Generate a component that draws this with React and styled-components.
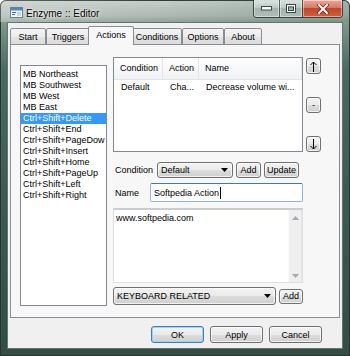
import React from 'react';
import styled, { createGlobalStyle } from 'styled-components';

const GlobalStyle = createGlobalStyle`
  html, body { margin: 0; padding: 0; background: #fff; }
  body { width: 350px; height: 356px; overflow: hidden; font-family: "Liberation Sans", Arial, sans-serif; }
  * { box-sizing: border-box; }
`;

const Window = styled.div`
  width: 350px;
  height: 356px;
  display: flex;
  flex-direction: column;
  padding: 0 7px 7px 7px;
  border-radius: 6px 6px 0 0;
  background: linear-gradient(180deg, #c4ccc8 0px, #a9b5af 16px, #7f958c 24px, #4a6a5f 70px, #3d5a50 200px, #334d45 100%);
  box-shadow: inset 0 0 0 1px #26352f;
`;

const TitleBar = styled.div`
  height: 22px;
  flex: none;
  display: flex;
  align-items: flex-start;
  margin: 0 -7px;
  padding: 0 7px 0 10px;
  border-radius: 6px 6px 0 0;
  background: linear-gradient(90deg, rgba(255,255,255,0.25) 0%, rgba(255,255,255,0.05) 45%, rgba(70,110,95,0.25) 100%);
`;

const TitleIcon = styled.svg`
  margin-top: 7px;
  flex: none;
`;

const TitleText = styled.div`
  margin-left: 3px;
  margin-top: 8px;
  font-size: 10px;
  line-height: 12px;
  color: #000;
  text-shadow: 0 0 5px rgba(255,255,255,0.95), 0 0 2px rgba(255,255,255,0.9);
`;

const Controls = styled.div`
  margin-left: auto;
  display: flex;
  height: 18px;
  border: 1px solid rgba(35,50,45,0.85);
  border-top: none;
  border-radius: 0 0 4px 4px;
  overflow: hidden;
`;

const CtrlBtn = styled.div`
  width: ${p => p.$w}px;
  height: 100%;
  display: flex;
  align-items: center;
  justify-content: center;
  border-left: ${p => (p.$first ? 'none' : '1px solid rgba(35,50,45,0.7)')};
  background: ${p =>
    p.$close
      ? 'linear-gradient(180deg, #e9a99c 0%, #d47a67 45%, #c2452c 50%, #d35e3f 100%)'
      : 'linear-gradient(180deg, rgba(235,242,239,0.75) 0%, rgba(200,214,208,0.6) 45%, rgba(160,180,172,0.55) 50%, rgba(185,205,198,0.6) 100%)'};
  box-shadow: inset 0 0 0 1px rgba(255,255,255,0.45);
`;

const Client = styled.div`
  flex: 1;
  display: flex;
  flex-direction: column;
  background: #f0f0f0;
  border: 1px solid #5f7770;
  padding: 3px 2px 0 2px;
`;

const TabStrip = styled.div`
  display: flex;
  align-items: flex-end;
  height: 19px;
  flex: none;
  position: relative;
  z-index: 1;
  margin-bottom: -1px;
`;

const Tab = styled.div`
  width: ${p => p.$w + (p.$active ? 4 : 0)}px;
  height: ${p => (p.$active ? 19 : 17)}px;
  margin: 0 ${p => (p.$active ? -2 : 0)}px;
  position: relative;
  z-index: ${p => (p.$active ? 2 : 1)};
  display: flex;
  align-items: center;
  justify-content: center;
  padding-bottom: ${p => (p.$active ? 2 : 0)}px;
  font-size: 9px;
  color: #000;
  border: 1px solid #898c95;
  border-bottom: ${p => (p.$active ? 'none' : '1px solid #898c95')};
  border-radius: 2px 2px 0 0;
  background: ${p => (p.$active ? '#f7f7f7' : 'linear-gradient(180deg, #f3f3f3 0%, #ececec 50%, #e2e2e2 51%, #dcdcdc 100%)')};
`;

const Panel = styled.div`
  height: 274px;
  flex: none;
  border: 1px solid #898c95;
  background: #f7f7f7;
  display: flex;
  align-items: flex-start;
  gap: 6px;
  padding: 12px 0 0 9px;
`;

const ListBox = styled.div`
  margin-top: 8px;
  width: 87px;
  height: 241px;
  border: 1px solid #828790;
  background: #fff;
  padding: 3px 0 0 0;
  overflow: hidden;
`;

const ListItem = styled.div`
  height: 11px;
  line-height: 11px;
  font-size: 9px;
  padding-left: 2px;
  white-space: nowrap;
  overflow: hidden;
  color: ${p => (p.$sel ? '#fff' : '#000')};
  background: ${p => (p.$sel ? '#3399ff' : 'transparent')};
`;

const RightCol = styled.div`
  width: 208px;
  display: flex;
  flex-direction: column;
`;

const TopRow = styled.div`
  display: flex;
  gap: 3px;
  height: 95px;
`;

const ListView = styled.div`
  width: 190px;
  height: 95px;
  border: 1px solid #828790;
  background: #fff;
  display: flex;
  flex-direction: column;
  overflow: hidden;
`;

const LvRow = styled.div`
  display: flex;
  height: ${p => (p.$header ? 22 : 14)}px;
  flex: none;
  background: ${p => (p.$header ? 'linear-gradient(180deg, #ffffff 0%, #f7f8f9 50%, #f1f2f4 100%)' : 'transparent')};
  border-bottom: ${p => (p.$header ? '1px solid #e2e3e6' : 'none')};
`;

const LvCell = styled.div`
  width: ${p => (p.$w ? `${p.$w}px` : 'auto')};
  flex: ${p => (p.$w ? 'none' : '1')};
  padding-left: ${p => (p.$header ? 6 : 7)}px;
  font-size: 9px;
  line-height: ${p => (p.$header ? 21 : 14)}px;
  color: #000;
  white-space: nowrap;
  overflow: hidden;
  border-right: ${p => (p.$header ? '1px solid #e3e4e7' : 'none')};
`;

const SideButtons = styled.div`
  width: 15px;
  display: flex;
  flex-direction: column;
  justify-content: space-between;
  padding-top: 1px;
`;

const Button = styled.div`
  width: ${p => p.$w}px;
  height: ${p => p.$h}px;
  flex: none;
  display: flex;
  align-items: center;
  justify-content: center;
  font-size: 9px;
  color: #000;
  border: 1px solid ${p => (p.$default ? '#3c7fb1' : '#707070')};
  border-radius: 3px;
  background: linear-gradient(180deg, #f2f2f2 0%, #ebebeb 50%, #dddddd 51%, #cfcfcf 100%);
  box-shadow: inset 0 0 0 1px ${p => (p.$default ? '#9ed4f3' : 'rgba(255,255,255,0.7)')};
`;

const FieldRow = styled.div`
  display: flex;
  align-items: center;
  gap: 3px;
  height: ${p => p.$h}px;
  margin-top: ${p => p.$mt}px;
`;

const Label = styled.div`
  width: ${p => p.$w}px;
  flex: none;
  padding-left: 2px;
  font-size: 9px;
  color: #000;
`;

const Combo = styled.div`
  width: ${p => p.$w}px;
  height: ${p => p.$h}px;
  flex: none;
  display: flex;
  align-items: center;
  justify-content: space-between;
  padding: 0 4px 0 3px;
  font-size: 9px;
  color: #000;
  border: 1px solid #707070;
  border-radius: 3px;
  background: linear-gradient(180deg, #f2f2f2 0%, #ebebeb 50%, #dddddd 51%, #cfcfcf 100%);
  box-shadow: inset 0 0 0 1px rgba(255,255,255,0.7);
`;

const Edit = styled.div`
  width: 153px;
  height: 19px;
  margin-left: -3px;
  display: flex;
  align-items: center;
  padding-left: 3px;
  font-size: 9px;
  color: #000;
  background: #fff;
  border: 1px solid #8db2e3;
  border-top-color: #3d7bad;
  border-radius: 2px;
`;

const Caret = styled.span`
  display: inline-block;
  width: 1px;
  height: 12px;
  margin-left: 1px;
  background: #000;
`;

const Memo = styled.div`
  margin-top: 6px;
  width: 190px;
  height: 75px;
  display: flex;
  background: #fff;
  border: 1px solid #dbdfe6;
  border-top: 2px solid #c9ccd1;
`;

const MemoText = styled.div`
  flex: 1;
  padding: 3px 2px;
  font-size: 9px;
  line-height: 11px;
  color: #000;
`;

const ScrollBar = styled.div`
  width: 14px;
  display: flex;
  flex-direction: column;
  justify-content: space-between;
  align-items: center;
  padding: 6px 0 4px;
  background: #efefef;
  border-left: 1px solid #fafafa;
  border-right: 1px solid #e6e6e6;
`;

const BottomBar = styled.div`
  display: flex;
  justify-content: flex-end;
  gap: 6px;
  margin-top: 8px;
  padding-right: 18px;
`;

const Arrow = ({ color = '#000' }) => (
  <svg width="7" height="4" viewBox="0 0 7 4"><polygon points="0,0 7,0 3.5,4" fill={color} /></svg>
);

const UpDown = ({ down }) => (
  <svg width="7" height="11" viewBox="0 0 7 11" style={down ? { transform: 'scaleY(-1)' } : undefined}>
    <path d="M3.5 1 V11 M0.5 4 L3.5 1 L6.5 4" stroke="#000" strokeWidth="1" fill="none" />
  </svg>
);

const tabs = [
  { label: 'Start', w: 36 },
  { label: 'Triggers', w: 44 },
  { label: 'Actions', w: 42, active: true },
  { label: 'Conditions', w: 50 },
  { label: 'Options', w: 42 },
  { label: 'About', w: 38 },
];

const items = [
  'MB Northeast',
  'MB Southwest',
  'MB West',
  'MB East',
  'Ctrl+Shift+Delete',
  'Ctrl+Shift+End',
  'Ctrl+Shift+PageDow',
  'Ctrl+Shift+Insert',
  'Ctrl+Shift+Home',
  'Ctrl+Shift+PageUp',
  'Ctrl+Shift+Left',
  'Ctrl+Shift+Right',
];

const columns = [
  { title: 'Condition', w: 49, value: 'Default' },
  { title: 'Action', w: 36, value: 'Cha...' },
  { title: 'Name', value: 'Decrease volume wi...' },
];

export default function App() {
  return (
    <>
      <GlobalStyle />
      <Window>
        <TitleBar>
          <TitleIcon width="13" height="11" viewBox="0 0 13 11">
            <rect x="0.5" y="0.5" width="12" height="10" fill="#f4f6f8" stroke="#6a7f95" />
            <rect x="1" y="1" width="11" height="2.5" fill="#4f86c6" />
            <rect x="2" y="5" width="4" height="1" fill="#3a6db0" />
            <rect x="2" y="7" width="3" height="1" fill="#3a6db0" />
            <rect x="7" y="5" width="4" height="4" fill="#c9d6e6" />
          </TitleIcon>
          <TitleText>Enzyme :: Editor</TitleText>
          <Controls>
            <CtrlBtn $w={25} $first>
              <svg width="11" height="5" viewBox="0 0 11 5"><rect x="0.5" y="0.5" width="10" height="3.5" fill="#fff" stroke="#3b4a45" /></svg>
            </CtrlBtn>
            <CtrlBtn $w={23}>
              <svg width="10" height="9" viewBox="0 0 10 9"><rect x="0.5" y="0.5" width="9" height="8" fill="none" stroke="#3b4a45" /><rect x="1.5" y="1.5" width="7" height="6" fill="none" stroke="#fff" /><rect x="2.5" y="3" width="5" height="3.5" fill="none" stroke="#3b4a45" /></svg>
            </CtrlBtn>
            <CtrlBtn $w={40} $close>
              <svg width="12" height="10" viewBox="0 0 12 10">
                <path d="M2 1 L10 9 M10 1 L2 9" stroke="#6b2418" strokeWidth="3.4" strokeLinecap="square" />
                <path d="M2 1 L10 9 M10 1 L2 9" stroke="#fff" strokeWidth="2" strokeLinecap="square" />
              </svg>
            </CtrlBtn>
          </Controls>
        </TitleBar>
        <Client>
          <TabStrip>
            {tabs.map(t => (
              <Tab key={t.label} $w={t.w} $active={t.active}>{t.label}</Tab>
            ))}
          </TabStrip>
          <Panel>
            <ListBox>
              {items.map(it => (
                <ListItem key={it} $sel={it === 'Ctrl+Shift+Delete'}>{it}</ListItem>
              ))}
            </ListBox>
            <RightCol>
              <TopRow>
                <ListView>
                  <LvRow $header>
                    {columns.map(c => (
                      <LvCell key={c.title} $header $w={c.w}>{c.title}</LvCell>
                    ))}
                  </LvRow>
                  <LvRow>
                    {columns.map(c => (
                      <LvCell key={c.title} $w={c.w}>{c.value}</LvCell>
                    ))}
                  </LvRow>
                </ListView>
                <SideButtons>
                  <Button $w={15} $h={16}><UpDown /></Button>
                  <Button $w={15} $h={16}>-</Button>
                  <Button $w={15} $h={16}><UpDown down /></Button>
                </SideButtons>
              </TopRow>
              <FieldRow $h={16} $mt={10}>
                <Label $w={41}>Condition</Label>
                <Combo $w={76} $h={16}>
                  <span>Default</span>
                  <Arrow />
                </Combo>
                <Button $w={25} $h={16}>Add</Button>
                <Button $w={35} $h={16}>Update</Button>
              </FieldRow>
              <FieldRow $h={19} $mt={5}>
                <Label $w={37}>Name</Label>
                <Edit>Softpedia Action<Caret /></Edit>
              </FieldRow>
              <Memo>
                <MemoText>www.softpedia.com</MemoText>
                <ScrollBar>
                  <svg width="7" height="4" viewBox="0 0 7 4"><polygon points="0,4 7,4 3.5,0" fill="#a8a8a8" /></svg>
                  <Arrow color="#a8a8a8" />
                </ScrollBar>
              </Memo>
              <FieldRow $h={18} $mt={4}>
                <Combo $w={163} $h={18}>
                  <span>KEYBOARD RELATED</span>
                  <Arrow />
                </Combo>
                <Button $w={24} $h={15}>Add</Button>
              </FieldRow>
            </RightCol>
          </Panel>
          <BottomBar>
            <Button $w={53} $h={17} $default>OK</Button>
            <Button $w={53} $h={17}>Apply</Button>
            <Button $w={53} $h={17}>Cancel</Button>
          </BottomBar>
        </Client>
      </Window>
    </>
  );
}
